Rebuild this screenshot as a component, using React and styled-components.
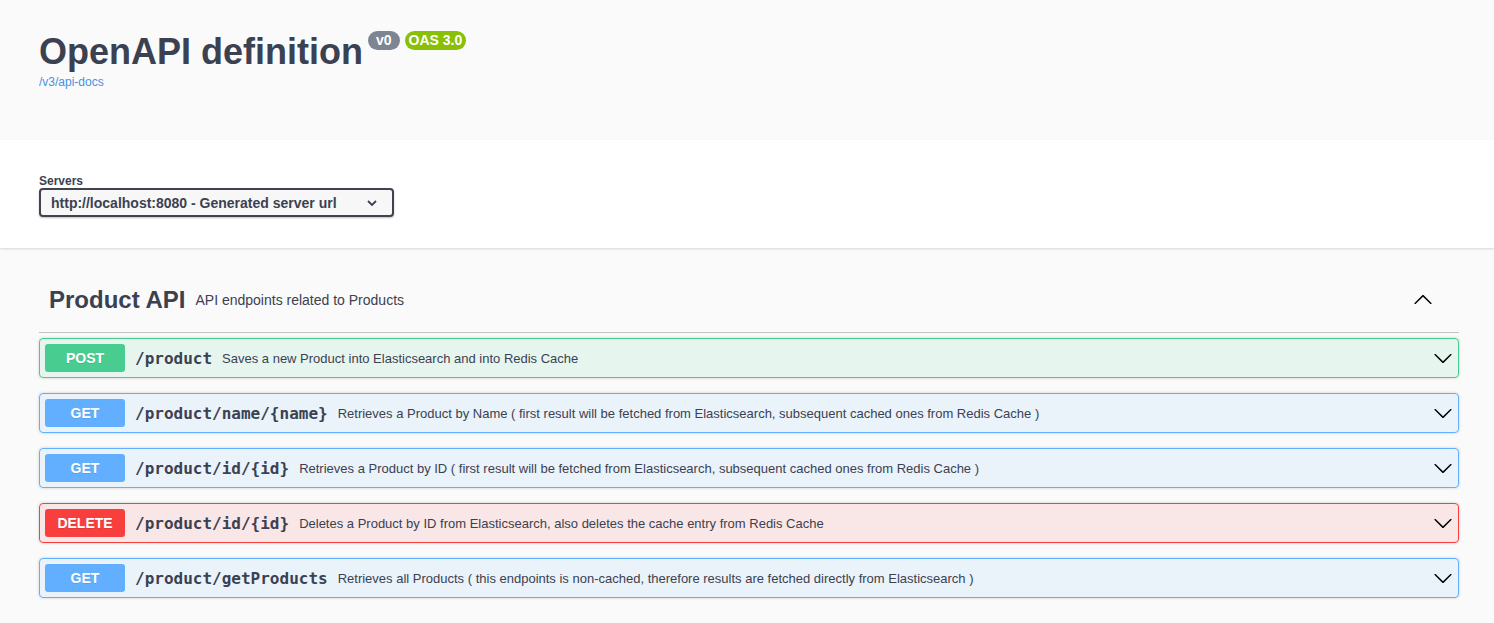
import React from "react";
import styled, { createGlobalStyle } from "styled-components";

const Global = createGlobalStyle`
  html, body { margin: 0; padding: 0; background: #fafafa; }
  body { font-family: "Liberation Sans", Arial, sans-serif; color: #3b4151; }
  * { box-sizing: border-box; }
`;

const Wrapper = styled.div`
  padding: 0 35px 0 39px;
`;

const InfoSection = styled.section`
  height: 140px;
  padding-top: 31px;
`;

const TitleRow = styled.div`
  display: flex;
  align-items: flex-start;
`;

const Title = styled.h2`
  margin: 0;
  font-size: 36px;
  font-weight: 700;
  color: #3b4151;
  line-height: 41px;
`;

const Pill = styled.small`
  margin-left: 5px;
  padding: 2px ${(p) => p.$pad}px;
  border-radius: 57px;
  background: ${(p) => p.$bg};
  color: #fff;
  font-size: 14px;
  font-weight: 700;
  line-height: 15px;
`;

const BaseUrl = styled.a`
  display: block;
  margin-top: 3px;
  font-size: 12px;
  color: #4990e2;
  text-decoration: none;
  line-height: 14px;
`;

const SchemeContainer = styled.section`
  background: #fff;
  padding: 30px 0;
  height: 108px;
  box-shadow: 0 1px 2px 0 rgba(0, 0, 0, 0.15);
`;

const ServersTitle = styled.div`
  font-size: 12px;
  font-weight: 700;
  line-height: 14px;
  padding-top: 4px;
`;

const Select = styled.div`
  display: flex;
  align-items: center;
  width: 355px;
  height: 29px;
  padding: 0 10px;
  border: 2px solid #41444e;
  border-radius: 4px;
  background: #f7f7f7;
  box-shadow: 0 1px 2px 0 rgba(0, 0, 0, 0.25);
  font-size: 14px;
  font-weight: 700;
  color: #3b4151;
  justify-content: space-between;
`;

const TagSection = styled.section`
  padding-top: 18px;
`;

const Tag = styled.div`
  display: flex;
  align-items: center;
  height: 67px;
  padding: 11px 20px 9px 10px;
  margin-bottom: 5px;
  border-bottom: 1px solid rgba(59, 65, 81, 0.3);
`;

const TagName = styled.h3`
  margin: 0;
  font-size: 24px;
  font-weight: 700;
  color: #3b4151;
`;

const TagDesc = styled.small`
  flex: 1;
  padding: 0 10px;
  font-size: 14px;
  font-weight: 400;
  color: #3b4151;
`;

const ExpandButton = styled.span`
  display: flex;
  width: 20px;
  height: 20px;
  margin-right: 6px;
`;

const colors = {
  POST: { c: "#49cc90", bg: "rgba(73,204,144,.1)" },
  GET: { c: "#61affe", bg: "rgba(97,175,254,.1)" },
  DELETE: { c: "#f93e3e", bg: "rgba(249,62,62,.1)" },
};

const OpBlock = styled.div`
  display: flex;
  align-items: center;
  height: 40px;
  padding: 5px;
  margin-bottom: 15px;
  border: 1px solid ${(p) => colors[p.$m].c};
  background: ${(p) => colors[p.$m].bg};
  border-radius: 4px;
  box-shadow: 0 0 3px rgba(0, 0, 0, 0.19);
`;

const Method = styled.span`
  min-width: 80px;
  padding: 6px 0;
  border-radius: 3px;
  background: ${(p) => colors[p.$m].c};
  color: #fff;
  font-size: 14px;
  font-weight: 700;
  line-height: 16px;
  text-align: center;
  text-shadow: 0 1px 0 rgba(0, 0, 0, 0.1);
`;

const Path = styled.span`
  padding: 0 10px;
  font-family: "DejaVu Sans Mono", monospace;
  font-size: 16px;
  font-weight: 600;
  color: #3b4151;
`;

const Desc = styled.span`
  flex: 1 1 auto;
  font-size: 13px;
  color: #3b4151;
`;

const Arrow = ({ up, size = 20 }) => (
  <svg
    width={size}
    height={size}
    viewBox="0 0 20 20"
    style={up ? { transform: "rotate(180deg)" } : undefined}
  >
    <path
      fill="#000"
      d="M17.418 6.109c.272-.268.709-.268.979 0s.271.701 0 .969l-7.908 7.83c-.27.268-.707.268-.979 0l-7.908-7.83c-.27-.268-.27-.701 0-.969.271-.268.709-.268.979 0L10 13.25l7.418-7.141z"
    />
  </svg>
);

const SmallChevron = () => (
  <svg width="12" height="8" viewBox="0 0 12 8" style={{ marginRight: 4 }}>
    <path d="M2 2l4 4 4-4" fill="none" stroke="#3b4151" strokeWidth="1.8" />
  </svg>
);

const ops = [
  { m: "POST", p: "/product", d: "Saves a new Product into Elasticsearch and into Redis Cache" },
  { m: "GET", p: "/product/name/{name}", d: "Retrieves a Product by Name ( first result will be fetched from Elasticsearch, subsequent cached ones from Redis Cache )" },
  { m: "GET", p: "/product/id/{id}", d: "Retrieves a Product by ID ( first result will be fetched from Elasticsearch, subsequent cached ones from Redis Cache )" },
  { m: "DELETE", p: "/product/id/{id}", d: "Deletes a Product by ID from Elasticsearch, also deletes the cache entry from Redis Cache" },
  { m: "GET", p: "/product/getProducts", d: "Retrieves all Products ( this endpoints is non-cached, therefore results are fetched directly from Elasticsearch )" },
];

export default function App() {
  return (
    <>
      <Global />
      <InfoSection>
        <Wrapper>
          <TitleRow>
            <Title>OpenAPI definition</Title>
            <Pill $bg="#7d8492" $pad={8}>v0</Pill>
            <Pill $bg="#89bf04" $pad={4}>OAS 3.0</Pill>
          </TitleRow>
          <BaseUrl href="#">/v3/api-docs</BaseUrl>
        </Wrapper>
      </InfoSection>
      <SchemeContainer>
        <Wrapper>
          <ServersTitle>Servers</ServersTitle>
          <Select>
            <span>http://localhost:8080 - Generated server url</span>
            <SmallChevron />
          </Select>
        </Wrapper>
      </SchemeContainer>
      <TagSection>
        <Wrapper>
          <Tag>
            <TagName>Product API</TagName>
            <TagDesc>API endpoints related to Products</TagDesc>
            <ExpandButton>
              <Arrow up />
            </ExpandButton>
          </Tag>
          {ops.map((o, i) => (
            <OpBlock key={i} $m={o.m}>
              <Method $m={o.m}>{o.m}</Method>
              <Path>{o.p}</Path>
              <Desc>{o.d}</Desc>
              <Arrow />
            </OpBlock>
          ))}
        </Wrapper>
      </TagSection>
    </>
  );
}
